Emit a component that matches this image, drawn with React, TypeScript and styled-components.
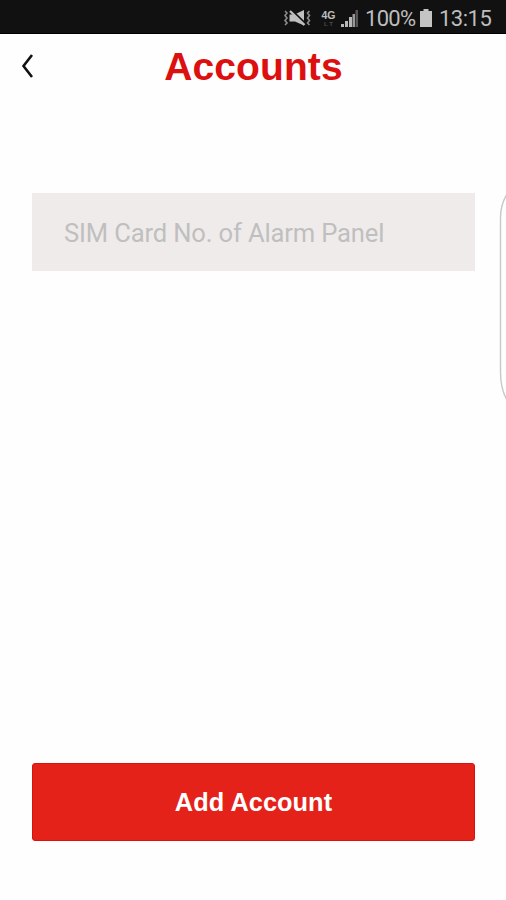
import React from "react";
import styled, { createGlobalStyle } from "styled-components";

const GlobalStyle = createGlobalStyle`
  * { box-sizing: border-box; }
  html, body { margin: 0; padding: 0; background: #fefefe; }
`;

const Screen = styled.div`
  position: relative;
  display: flex;
  flex-direction: column;
  width: 506px;
  height: 900px;
  overflow: hidden;
  background: #fefefe;
`;

const StatusBar = styled.header`
  display: flex;
  align-items: center;
  justify-content: flex-end;
  height: 34px;
  flex: none;
  padding: 3px 14px 0 0;
  background: #111;
  border-bottom: 1px solid #000;
  color: #bdbdbd;
  font: 400 22px/30px Roboto, sans-serif;
`;

const StatusText = styled.span<{ $width: number; $spacing: number }>`
  width: ${(p) => p.$width}px;
  padding-top: 1px;
  letter-spacing: ${(p) => p.$spacing}px;
  white-space: nowrap;
`;

const StatusIcon = styled.svg<{ $gap: number }>`
  display: block;
  flex: none;
  margin-right: ${(p) => p.$gap}px;
`;

const Network = styled.div`
  display: flex;
  flex-direction: column;
  align-items: center;
  width: 15px;
  margin-right: 5px;
  font-family: "Liberation Sans", Arial, sans-serif;
  font-weight: 700;
`;

const NetworkType = styled.span`
  font-size: 10.5px;
  line-height: 12px;
`;

const NetworkSub = styled.span`
  padding-left: 2px;
  color: #4c4c4c;
  font-size: 6px;
  line-height: 7px;
  letter-spacing: 2px;
`;

const TitleBar = styled.div`
  display: flex;
  align-items: center;
  height: 64px;
  flex: none;
  padding: 0 20px;
`;

const BackButton = styled.button`
  width: 40px;
  height: 40px;
  padding: 0;
  border: 0;
  background: none;
  svg { display: block; }
`;

const Title = styled.h1`
  flex: 1;
  margin: 1px 39px 0 0;
  text-align: center;
  color: #dd1010;
  font: 700 39px/44px "Liberation Sans", Arial, sans-serif;
  letter-spacing: 0.1px;
`;

const Content = styled.main`
  display: flex;
  flex: 1;
  flex-direction: column;
  justify-content: space-between;
  padding: 95px 31px 59px 32px;
`;

const Field = styled.div`
  display: flex;
  align-items: center;
  height: 78px;
  padding: 1px 32px 0;
  background: #efebea;
  color: #c0bfbf;
  font: 400 25.6px/32px Roboto, sans-serif;
  letter-spacing: -0.16px;
  white-space: nowrap;
`;

const AddButton = styled.button`
  height: 78px;
  padding: 0 0 1px;
  border: 1px solid #d8120f;
  border-radius: 3px;
  background: #e52219;
  color: #fff;
  font: 700 25.3px/32px "Liberation Sans", Arial, sans-serif;
  letter-spacing: 0.08px;
`;

const EdgeHandle = styled.svg`
  position: absolute;
  top: 190px;
  right: 0;
`;

export default function App() {
  return (
    <Screen>
      <GlobalStyle />
      <StatusBar>
        <StatusIcon $gap={10} width="27" height="18" viewBox="0 0 27 18" fill="none" stroke="#8c8c8c">
          <path d="M1 2l2 2-2 2.500 2 2.500-2 2.500 2 2.500-2 2M25.500 2l-2 2 2 2.500-2 2.500 2 2.500-2 2.500 2 2" strokeWidth="1.600" />
          <path d="M5.500 5.500h5L20 1v15.500L11 12.500H5.500z" fill="#c0c0c0" stroke="none" />
          <path d="M8 1.500l13.500 13" stroke="#111" strokeWidth="1.800" />
          <path d="M6 2l14.500 14" stroke="#bdbdbd" strokeWidth="2.400" />
        </StatusIcon>
        <Network>
          <NetworkType>4G</NetworkType>
          <NetworkSub>LT</NetworkSub>
        </Network>
        <StatusIcon $gap={6} width="18" height="18" viewBox="0 0 18 18">
          <path d="M0 15h3v3H0zM4 12h3v6H4zM8 8h3v10H8z" fill="#b8b8b8" />
          <path d="M11.500 5h2.500v13h-2.500z" fill="#999" />
          <path d="M14.500 1H17v17h-2.500z" fill="#555" />
        </StatusIcon>
        <StatusText $width={55} $spacing={-0.7}>100%</StatusText>
        <StatusIcon $gap={7} width="12" height="18" viewBox="0 0 12 18" fill="#c4c4c4">
          <path d="M3.500 0h5v2H12v16H0V2h3.500z" />
        </StatusIcon>
        <StatusText $width={53} $spacing={-0.5}>13:15</StatusText>
      </StatusBar>
      <TitleBar>
        <BackButton aria-label="Back">
          <svg width="16" height="40" viewBox="0 0 16 40" fill="none" stroke="#111" strokeWidth="2.600">
            <path d="M12 9L3.500 20L12 31" />
          </svg>
        </BackButton>
        <Title>Accounts</Title>
      </TitleBar>
      <Content>
        <Field>SIM Card No. of Alarm Panel</Field>
        <AddButton>Add Account</AddButton>
      </Content>
      <EdgeHandle width="7" height="212" viewBox="0 0 7 212" fill="none" stroke="#c8c8c8" strokeWidth="1.400">
        <path d="M8 4Q1.500 15 1.500 28V182Q1.500 199 8 210" />
      </EdgeHandle>
    </Screen>
  );
}
